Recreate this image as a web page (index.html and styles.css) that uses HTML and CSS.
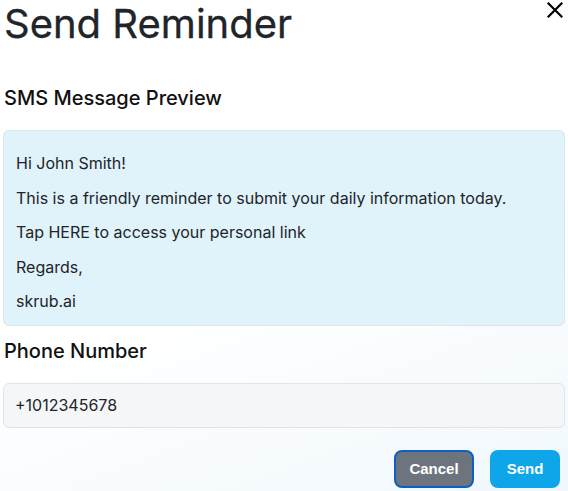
FILE: index.html
```html
<!DOCTYPE html>
<html>
<head>
<meta charset="utf-8">
<link rel="stylesheet" href="styles.css">
</head>
<body>
<div class="modal">
  <div class="header">
    <h1 class="title">Send Reminder</h1>
    <button class="close" aria-label="Close">
      <svg width="16" height="16" viewBox="0 0 16 16"><path d="M1.5 1.5 L14.5 14.5 M14.5 1.5 L1.5 14.5" stroke="#000" stroke-width="2.2" stroke-linecap="square"/></svg>
    </button>
  </div>
  <h2 class="section">SMS Message Preview</h2>
  <div class="preview">
    <p>Hi John Smith!</p>
    <p>This is a friendly reminder to submit your daily information today.</p>
    <p>Tap HERE to access your personal link</p>
    <p>Regards,</p>
    <p>skrub.ai</p>
  </div>
  <h2 class="section phone">Phone Number</h2>
  <div class="input">+1012345678</div>
  <div class="actions">
    <button class="btn cancel">Cancel</button>
    <button class="btn send">Send</button>
  </div>
</div>
</body>
</html>
```
FILE: styles.css
```css
html, body {
  margin: 0;
  height: 100%;
}
body {
  background: linear-gradient(160deg, #ffffff 0%, #ffffff 55%, #f0f8fd 100%);
  font-family: Inter, "Noto Sans", sans-serif;
  color: #212529;
}
.modal {
  padding: 0 3px;
}
.header {
  display: flex;
  justify-content: space-between;
  align-items: flex-start;
}
.title {
  margin: 0 0 0 1px;
  font-size: 40px;
  font-weight: 400;
  line-height: 48px;
  color: #212529;
  -webkit-text-stroke: 0.3px #212529;
}
.close {
  border: 0;
  background: none;
  padding: 0;
  margin: 2px 2px 0 0;
  width: 16px;
  height: 16px;
}
.close svg { display: block; }
.section {
  margin: 38px 0 0 1px;
  font-size: 20px;
  font-weight: 500;
  line-height: 24px;
  color: #111;
}
.preview {
  margin-top: 20px;
  background: #e0f2fa;
  border: 1px solid #dde6ea;
  border-radius: 6px;
  padding: 20px 12px 11px;
  font-size: 16px;
  color: #212529;
}
.preview p {
  margin: 0 0 10px;
  line-height: 24.5px;
}
.preview p:last-child {
  margin-bottom: 0;
}
.phone {
  margin-top: 13px;
}
.input {
  margin-top: 20px;
  height: 45px;
  box-sizing: border-box;
  border: 1px solid #e2e5e8;
  border-radius: 6px;
  background: #f4f6f8;
  padding: 0 11px;
  display: flex;
  align-items: center;
  font-size: 16px;
  color: #212529;
}
.actions {
  display: flex;
  justify-content: flex-end;
  gap: 16px;
  margin-top: 22px;
  padding-right: 5px;
}
.btn {
  font-family: "Liberation Sans", Arial, sans-serif;
  font-weight: 700;
  font-size: 15px;
  height: 38px;
  border-radius: 8px;
  color: #fff;
  cursor: pointer;
}
.cancel {
  width: 80px;
  background: #6c757d;
  border: 2px solid #0d5fc4;
}
.send {
  width: 70px;
  background: #0ea5e9;
  border: 0;
}
```
